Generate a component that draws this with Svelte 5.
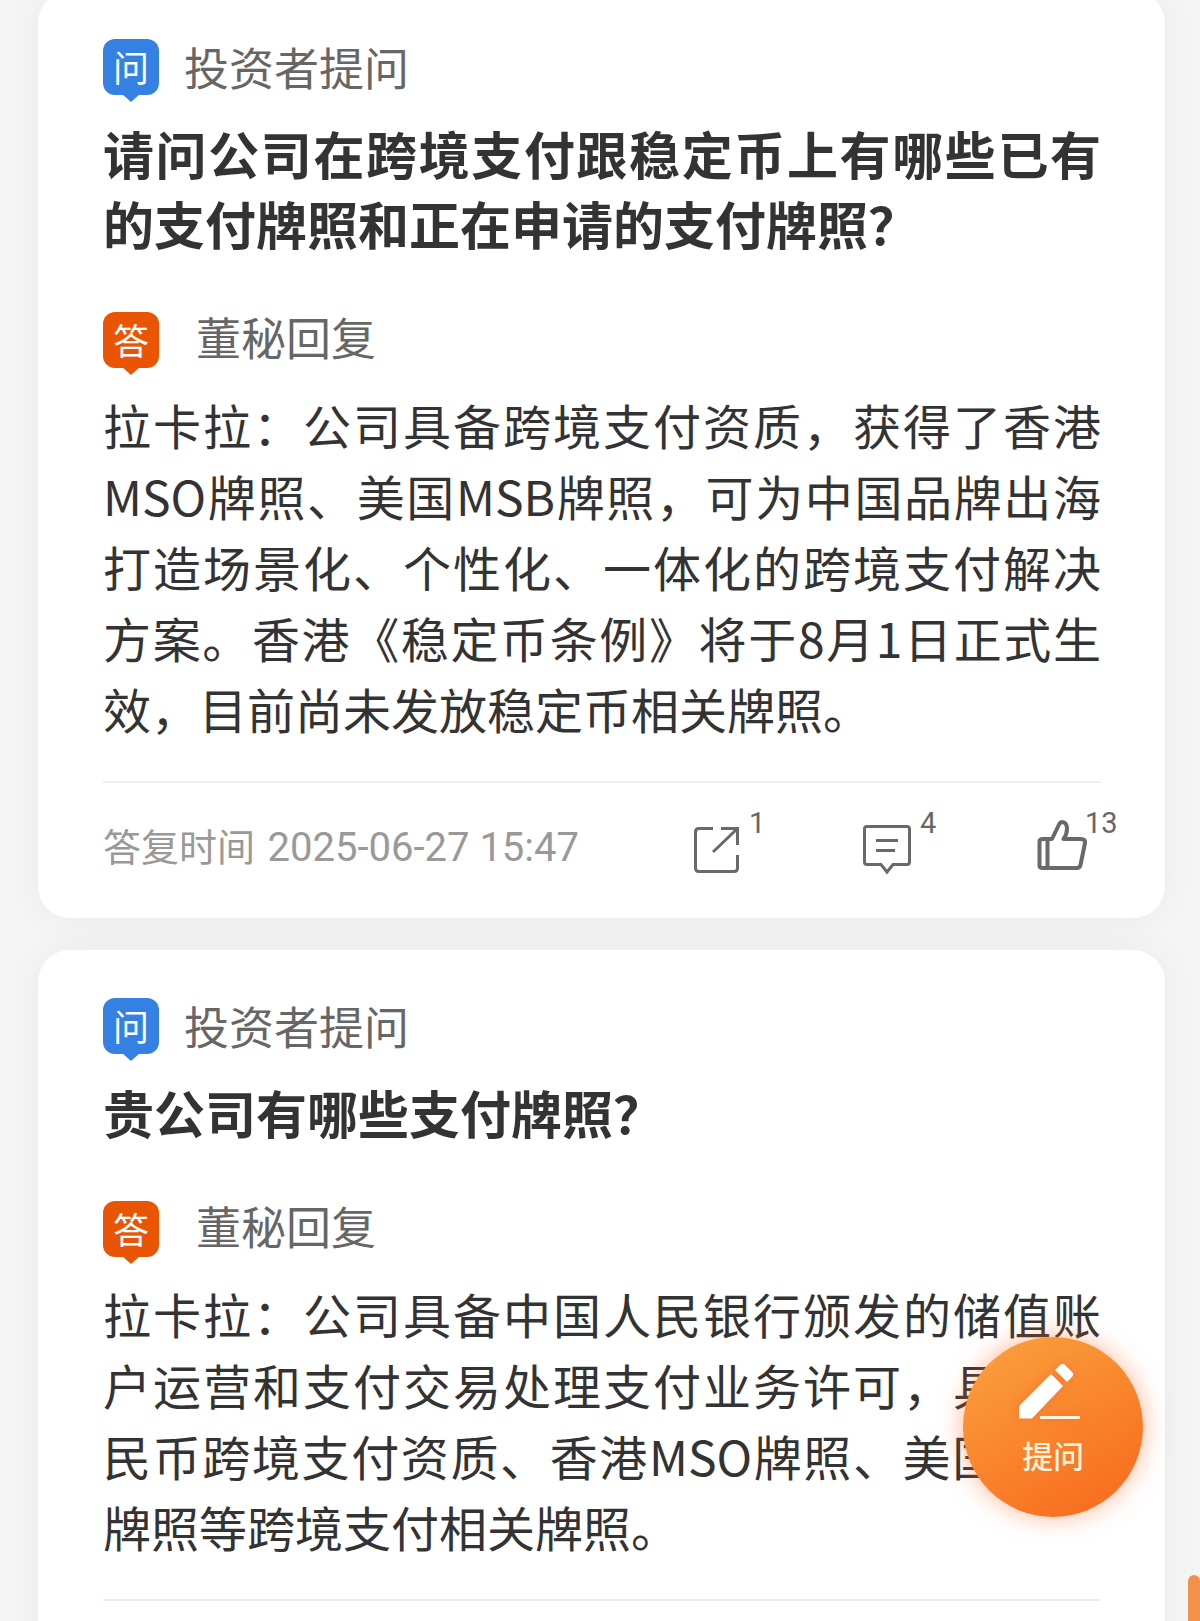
<script>
  const cards = [
    {
      question: '请问公司在跨境支付跟稳定币上有哪些已有的支付牌照和正在申请的支付牌照？',
      answer:
        '拉卡拉：公司具备跨境支付资质，获得了香港MSO牌照、美国MSB牌照，可为中国品牌出海打造场景化、个性化、一体化的跨境支付解决方案。香港《稳定币条例》将于8月1日正式生效，目前尚未发放稳定币相关牌照。',
      time: '2025-06-27 15:47',
      shares: 1,
      comments: 4,
      likes: 13
    },
    {
      question: '贵公司有哪些支付牌照？',
      answer:
        '拉卡拉：公司具备中国人民银行颁发的储值账户运营和支付交易处理支付业务许可，具备人民币跨境支付资质、香港MSO牌照、美国MSB牌照等跨境支付相关牌照。'
    }
  ];
</script>

<main class="screen">
  <div class="list">
    {#each cards as card}
      <article class="card">
        <div class="head">
          <span class="badge ask">问</span>
          <span class="label">投资者提问</span>
        </div>
        <h2 class="question">{card.question}</h2>
        <div class="head reply">
          <span class="badge answer">答</span>
          <span class="label">董秘回复</span>
        </div>
        <p class="body">{card.answer}</p>
        <footer class="foot">
          {#if card.time}
            <span class="time">答复时间 <time>{card.time}</time></span>
            <div class="actions">
              <button class="action" type="button" aria-label="分享">
                <svg viewBox="0 0 56 56" fill="none" stroke="#696969" stroke-width="3">
                  <path d="M24 9.500H10Q6.500 9.500 6.500 13V49Q6.500 52.500 10 52.500H45Q48.500 52.500 48.500 49V36" />
                  <path d="M32 9.500H48.500V26M48 10L24 33" />
                </svg>
                <span class="count">{card.shares}</span>
              </button>
              <button class="action" type="button" aria-label="评论">
                <svg viewBox="0 0 56 56" fill="none" stroke="#696969" stroke-width="3">
                  <path d="M7 7.500H47Q49.500 7.500 49.500 10V43Q49.500 45.500 47 45.500H33L27 53L21 45.500H7Q4.500 45.500 4.500 43V10Q4.500 7.500 7 7.500Z" />
                  <path d="M16 21.500H38M16 31.500H35" />
                </svg>
                <span class="count">{card.comments}</span>
              </button>
              <button class="action" type="button" aria-label="点赞">
                <svg viewBox="0 0 56 56" fill="none" stroke="#696969" stroke-width="4" stroke-linejoin="round">
                  <path d="M12 20H21L28 5.500C30 1.500 36 2.500 36 10C36 14 34 18 32.500 20H50Q54.500 20 54 24L49.500 46Q48.500 49 46 49H12Q8.500 49 8.500 46.500V22.500Q8.500 20 12 20ZM16.500 20V49" />
                </svg>
                <span class="count near">{card.likes}</span>
              </button>
            </div>
          {/if}
        </footer>
      </article>
    {/each}
  </div>

  <button class="fab" type="button">
    <svg viewBox="0 0 62 57" fill="#fff">
      <path d="M1 43L33 11L45 23L14 55.500H1Z" />
      <path d="M37 7L42 2Q44.500 -0.500 47 2L54 9Q56.500 11.500 54 14L49 19Z" />
      <path d="M22 53H62V56H22Z" fill="#fff3e2" />
    </svg>
    <span>提问</span>
  </button>
  <div class="scroll-thumb"></div>
</main>

<style>
  :global(body) {
    background: #f5f5f5;
  }
  .screen {
    height: 100vh;
    overflow: hidden;
    font-family: 'Noto Sans CJK SC', sans-serif;
    color: #333;
  }
  .list {
    display: flex;
    flex-direction: column;
    gap: 32px;
    margin: -9px 35px 0 38px;
  }
  .card {
    flex: none;
    padding: 48px 64px 0 65px;
    border-radius: 32px;
    background: #fff;
    box-shadow: 0 0 40px rgba(0, 0, 0, 0.05);
  }
  .head {
    display: flex;
    align-items: center;
    gap: 25px;
    height: 56px;
  }
  .reply {
    gap: 37px;
    margin-top: 54px;
  }
  .badge {
    position: relative;
    width: 56px;
    height: 56px;
    border-radius: 12px;
    color: #fff;
    font-size: 36px;
    line-height: 54px;
    text-align: center;
  }
  .badge::after {
    content: '';
    position: absolute;
    top: 100%;
    left: 50%;
    margin: -1px 0 0 -9px;
    border: 9px solid transparent;
    border-top: 8px solid;
    border-bottom: 0;
  }
  .ask {
    background: #3480e3;
  }
  .ask::after {
    border-top-color: #3480e3;
  }
  .answer {
    background: #e95504;
  }
  .answer::after {
    border-top-color: #e95504;
  }
  .label {
    color: #666;
    font-size: 45px;
    line-height: 56px;
  }
  .reply .label {
    align-self: flex-start;
    line-height: 50px;
  }
  .question {
    margin: 23px 0 0;
    font-size: 51px;
    line-height: 70px;
    font-weight: 700;
    text-align: justify;
  }
  .body {
    margin: 21px 0 37px;
    font-size: 48px;
    line-height: 71px;
    text-align: justify;
  }
  .foot {
    display: flex;
    align-items: center;
    justify-content: space-between;
    box-sizing: border-box;
    height: 137px;
    padding: 0 14px 8px 0;
    border-top: 2px solid #eee;
  }
  .time {
    color: #999;
    font-size: 38px;
    line-height: 56px;
    white-space: nowrap;
  }
  time {
    margin-left: 4px;
    font-family: Roboto, sans-serif;
    font-size: 40px;
  }
  .actions {
    display: flex;
    justify-content: space-between;
    flex: 0 1 398px;
  }
  button {
    border: 0;
    padding: 0;
    font-family: inherit;
    cursor: pointer;
  }
  .action {
    position: relative;
    background: none;
    color: #666;
  }
  .action svg {
    display: block;
    width: 56px;
    height: 56px;
  }
  .count {
    position: absolute;
    top: -14px;
    left: 60px;
    font-family: Roboto, sans-serif;
    font-size: 29px;
    line-height: 36px;
  }
  .near {
    left: 54px;
  }
  .fab {
    position: fixed;
    right: 57px;
    bottom: 104px;
    display: flex;
    flex-direction: column;
    align-items: center;
    gap: 15px;
    box-sizing: border-box;
    width: 180px;
    height: 180px;
    padding-top: 26px;
    border-radius: 50%;
    background: linear-gradient(150deg, #faa03e 5%, #f86a1c 95%);
    box-shadow: 0 0 24px rgba(255, 106, 40, 0.5);
    color: #fff3e2;
    font-size: 31px;
    line-height: 40px;
    font-weight: 500;
  }
  .fab svg {
    flex: none;
    width: 62px;
    height: 57px;
    margin-right: 8px;
    filter: drop-shadow(0 0 4px rgba(250, 90, 40, 0.5));
  }
  .scroll-thumb {
    position: fixed;
    right: 0;
    bottom: 0;
    width: 12px;
    height: 46px;
    border-radius: 6px 6px 0 0;
    background: #f2914b;
  }
</style>
